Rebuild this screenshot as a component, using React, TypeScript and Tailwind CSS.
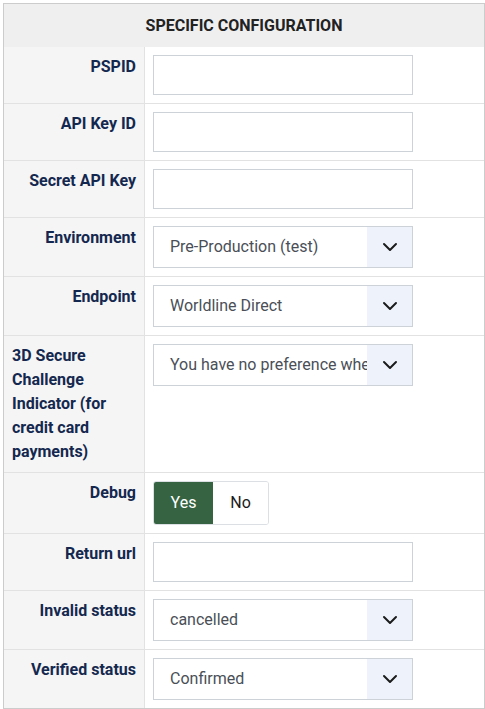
const font = { fontFamily: "Roboto, 'Noto Sans', sans-serif" };

function Chevron() {
  return (
    <svg width="16" height="10" viewBox="0 0 16 10" fill="none">
      <path d="M2 2l6 6 6-6" stroke="#1b1b1b" strokeWidth="2" strokeLinecap="round" strokeLinejoin="round" />
    </svg>
  );
}

function TextInput() {
  return <div className="h-10 w-[260px] border border-[#cdd1d8] bg-white" />;
}

function Select({ value }: { value: string }) {
  return (
    <div className="flex h-[42px] w-[260px] border border-[#cdd1d8] bg-white">
      <div className="flex-1 overflow-hidden whitespace-nowrap pl-4 text-[16px] leading-[40px] text-[#4a4f57]">
        {value}
      </div>
      <div className="flex w-[45px] shrink-0 items-center justify-center bg-[#eef3fb]">
        <Chevron />
      </div>
    </div>
  );
}

function Toggle() {
  return (
    <div className="flex h-[44px] w-[116px] overflow-hidden rounded-[3px] border border-[#dcdfe3] text-[16px]">
      <div className="flex w-[59px] items-center justify-center bg-[#366443] text-white">Yes</div>
      <div className="flex flex-1 items-center justify-center bg-white text-[#1b1b1b]">No</div>
    </div>
  );
}

function Row({
  label,
  children,
  left,
  last,
}: {
  label: string;
  children: React.ReactNode;
  left?: boolean;
  last?: boolean;
}) {
  return (
    <div className={`flex ${last ? "" : "border-b border-[#e2e2e2]"}`}>
      <div
        className={`w-[141px] shrink-0 border-r border-[#e2e2e2] bg-[#f5f5f5] px-2 py-2 text-[16px] font-bold leading-6 text-[#14284f] ${
          left ? "text-left" : "text-right"
        }`}
      >
        {label}
      </div>
      <div className="flex-1 bg-white p-2">{children}</div>
    </div>
  );
}

export default function App() {
  return (
    <div className="min-h-screen bg-white pl-[3px] pt-[3px]" style={font}>
      <div className="w-[482px] border border-[#cccccc]">
        <div className="h-[43px] bg-[#efefef] text-center text-[16px] font-bold leading-[43px] text-[#222]">
          SPECIFIC CONFIGURATION
        </div>
        <Row label="PSPID">
          <TextInput />
        </Row>
        <Row label="API Key ID">
          <TextInput />
        </Row>
        <Row label="Secret API Key">
          <TextInput />
        </Row>
        <Row label="Environment">
          <Select value="Pre-Production (test)" />
        </Row>
        <Row label="Endpoint">
          <Select value="Worldline Direct" />
        </Row>
        <Row label="3D Secure Challenge Indicator (for credit card payments)" left>
          <Select value="You have no preference whether a challenge should be performed" />
        </Row>
        <Row label="Debug">
          <Toggle />
        </Row>
        <Row label="Return url">
          <TextInput />
        </Row>
        <Row label="Invalid status">
          <Select value="cancelled" />
        </Row>
        <Row label="Verified status" last>
          <Select value="Confirmed" />
        </Row>
      </div>
    </div>
  );
}
